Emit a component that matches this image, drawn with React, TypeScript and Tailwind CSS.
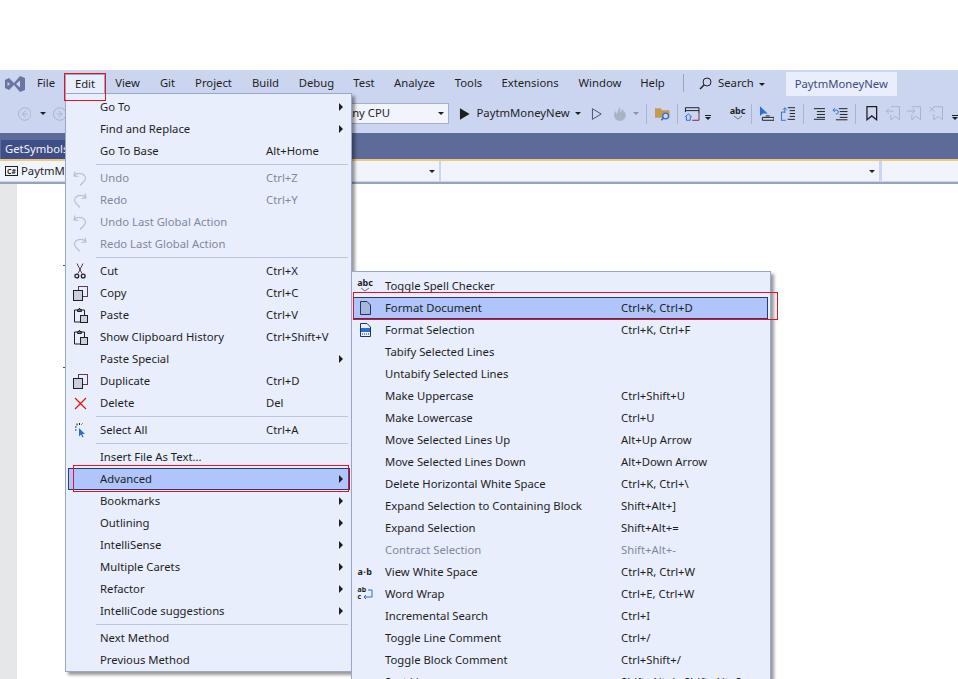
import type { ReactNode } from "react";

type Row = {
  label?: string;
  keys?: string;
  arrow?: boolean;
  off?: boolean;
  active?: boolean;
  icon?: ReactNode;
  sep?: boolean;
};

function Ico({ children, w = 16, h = 16 }: { children: ReactNode; w?: number; h?: number }) {
  return (
    <svg width={w} height={h} viewBox={`0 0 ${w} ${h}`} fill="none" className="block shrink-0">
      {children}
    </svg>
  );
}

const UndoIcon = (
  <Ico w={14} h={16}>
    <path d="M2 1.500 1 6l4.500.5M1.500 5.500C4 2.500 9 3 11.500 5.500c2 2.500.5 5-1 6.500l-3.500 3.500" stroke="#b9c0cf" strokeWidth="1.200" />
  </Ico>
);
const RedoIcon = (
  <Ico w={14} h={16}>
    <path d="M12 1.500 13 6l-4.500.5M12.500 5.500C10 2.500 5 3 2.500 5.500c-2 2.500-.5 5 1 6.500l3.500 3.500" stroke="#b9c0cf" strokeWidth="1.200" />
  </Ico>
);
const CutIcon = (
  <Ico w={12} h={16}>
    <path d="M3 .5l5 10M9 .5l-5 10" stroke="#5b3a4a" />
    <circle cx="2.800" cy="13" r="1.900" stroke="#1e1e1e" strokeWidth="1.300" />
    <circle cx="9.200" cy="13" r="1.900" stroke="#1e1e1e" strokeWidth="1.300" />
  </Ico>
);
const CopyIcon = (
  <Ico w={15} h={15}>
    <rect x="5.500" y="0.500" width="9" height="10" fill="#e9eefc" stroke="#5b3a5a" />
    <rect x="0.500" y="4.500" width="9" height="10" fill="#c9cfdc" stroke="#1e1e1e" />
  </Ico>
);
const PasteIcon = (
  <Ico w={15} h={16}>
    <path d="M4 3H1.500v12H7M9 3h2.500v5" stroke="#1e1e1e" />
    <path d="M4.500 4.500V2.500h1.500l.5-1.500 .5 1.500h1.500v2z" fill="#6b7386" stroke="#1e1e1e" />
    <rect x="7.500" y="8.500" width="7" height="7" fill="#c9cfdc" stroke="#1e1e1e" />
  </Ico>
);
const DeleteIcon = (
  <Ico w={13} h={13}>
    <path d="M1 1l11 11M12 1 1 12" stroke="#e51400" strokeWidth="1.200" />
  </Ico>
);
const SelectAllIcon = (
  <Ico w={11} h={15}>
    <path d="M4 5v8.500l2-2 1.500 3 1-.5-1.300-3H10z" fill="#2a6fc9" />
    <path d="M0 4h1.500M2 .5v2M4.500 0v2M0 7h1.500M6.500 1.500l1-1" stroke="#1e1e1e" />
  </Ico>
);
const SpellIcon = (
  <div className="flex h-[16px] w-[16px] flex-col items-center">
    <span className="text-[9px] leading-[9px] font-bold text-[#1e1e1e]">abc</span>
    <svg width="10" height="5" viewBox="0 0 10 5" fill="none">
      <path d="M1 1l4 3 4-3" stroke="#6b7386" />
    </svg>
  </div>
);
const FormatDocIcon = (
  <Ico w={13} h={14}>
    <path d="M1.500.5h6.500l3.500 3.500v9.500h-10z" fill="#a9b7dc" stroke="#27335f" />
  </Ico>
);
const FormatSelIcon = (
  <Ico w={13} h={14}>
    <path d="M1.500.5h6.500l3.500 3.500v9.500h-10z" fill="#e9eefc" stroke="#27335f" />
    <rect x="2" y="5" width="9" height="4" fill="#2a6fc9" />
    <path d="M3 11h7" stroke="#27335f" strokeDasharray="1 1" />
  </Ico>
);
const WhiteSpaceIcon = (
  <span className="text-[9px] leading-[16px] font-bold tracking-[0.5px] text-[#1e1e1e]">a·b</span>
);
const WrapIcon = (
  <div className="relative h-[16px] w-[15px]">
    <span className="block text-[7px] leading-[7px] font-bold text-[#1e1e1e]">ab</span>
    <span className="block text-[7px] leading-[7px] font-bold text-[#1e1e1e]">c</span>
    <svg width="15" height="14" viewBox="0 0 15 14" fill="none" className="absolute top-[1px] left-0">
      <path d="M10 3h4v7H6M8 8l-2 2 2 2" stroke="#2a6fc9" />
    </svg>
  </div>
);

const editRows: Row[] = [
  { label: "Go To", arrow: true },
  { label: "Find and Replace", arrow: true },
  { label: "Go To Base", keys: "Alt+Home" },
  { sep: true },
  { label: "Undo", keys: "Ctrl+Z", off: true, icon: UndoIcon },
  { label: "Redo", keys: "Ctrl+Y", off: true, icon: RedoIcon },
  { label: "Undo Last Global Action", off: true, icon: UndoIcon },
  { label: "Redo Last Global Action", off: true, icon: RedoIcon },
  { sep: true },
  { label: "Cut", keys: "Ctrl+X", icon: CutIcon },
  { label: "Copy", keys: "Ctrl+C", icon: CopyIcon },
  { label: "Paste", keys: "Ctrl+V", icon: PasteIcon },
  { label: "Show Clipboard History", keys: "Ctrl+Shift+V", icon: PasteIcon },
  { label: "Paste Special", arrow: true },
  { label: "Duplicate", keys: "Ctrl+D", icon: CopyIcon },
  { label: "Delete", keys: "Del", icon: DeleteIcon },
  { sep: true },
  { label: "Select All", keys: "Ctrl+A", icon: SelectAllIcon },
  { sep: true },
  { label: "Insert File As Text..." },
  { label: "Advanced", arrow: true, active: true },
  { label: "Bookmarks", arrow: true },
  { label: "Outlining", arrow: true },
  { label: "IntelliSense", arrow: true },
  { label: "Multiple Carets", arrow: true },
  { label: "Refactor", arrow: true },
  { label: "IntelliCode suggestions", arrow: true },
  { sep: true },
  { label: "Next Method" },
  { label: "Previous Method" },
];

const advancedRows: Row[] = [
  { label: "Toggle Spell Checker", icon: SpellIcon },
  { label: "Format Document", keys: "Ctrl+K, Ctrl+D", active: true, icon: FormatDocIcon },
  { label: "Format Selection", keys: "Ctrl+K, Ctrl+F", icon: FormatSelIcon },
  { label: "Tabify Selected Lines" },
  { label: "Untabify Selected Lines" },
  { label: "Make Uppercase", keys: "Ctrl+Shift+U" },
  { label: "Make Lowercase", keys: "Ctrl+U" },
  { label: "Move Selected Lines Up", keys: "Alt+Up Arrow" },
  { label: "Move Selected Lines Down", keys: "Alt+Down Arrow" },
  { label: "Delete Horizontal White Space", keys: "Ctrl+K, Ctrl+\\" },
  { label: "Expand Selection to Containing Block", keys: "Shift+Alt+]" },
  { label: "Expand Selection", keys: "Shift+Alt+=" },
  { label: "Contract Selection", keys: "Shift+Alt+-", off: true },
  { label: "View White Space", keys: "Ctrl+R, Ctrl+W", icon: WhiteSpaceIcon },
  { label: "Word Wrap", keys: "Ctrl+E, Ctrl+W", icon: WrapIcon },
  { label: "Incremental Search", keys: "Ctrl+I" },
  { label: "Toggle Line Comment", keys: "Ctrl+/" },
  { label: "Toggle Block Comment", keys: "Ctrl+Shift+/" },
  { label: "Sort Lines", keys: "Shift+Alt+L, Shift+Alt+S" },
];

function MenuRow({ row, labelW }: { row: Row; labelW: string }) {
  if (row.sep) {
    return (
      <div className="flex h-[5px] items-center pr-[2px] pl-[28px]">
        <div className="h-px w-full bg-[#bcc5de]" />
      </div>
    );
  }
  return (
    <div
      className={`flex h-[22px] items-center border ${
        row.active ? "border-[#2d3a70] bg-[#afc5fb]" : "border-transparent"
      } ${row.off ? "text-[#80889c]" : "text-[#1e1e1e]"}`}
    >
      <div className="w-[31px] shrink-0">
        <div className="flex w-[22px] justify-center">{row.icon}</div>
      </div>
      <div className={`${labelW} shrink-0 whitespace-nowrap`}>{row.label}</div>
      <div className="whitespace-nowrap">{row.keys}</div>
      {row.arrow && <div className="mr-[6px] ml-auto h-0 w-0 border-y-[4px] border-l-[4px] border-y-transparent border-l-[#1e1e1e]" />}
    </div>
  );
}

function Caret({ className = "" }: { className?: string }) {
  return <div className={`h-0 w-0 border-x-[3px] border-t-[3px] border-x-transparent border-t-[#1e1e1e] ${className}`} />;
}

function Gripper({ className = "" }: { className?: string }) {
  return <div className={`h-[18px] w-[4px] bg-[radial-gradient(#5d6b99_45%,transparent_50%)] bg-[length:2px_2px] ${className}`} />;
}

function ToolSep({ className = "" }: { className?: string }) {
  return <div className={`h-[20px] w-px bg-[#aab3cf] ${className}`} />;
}

function Combo({ className = "", children }: { className?: string; children?: ReactNode }) {
  return (
    <div className={`flex h-[20px] shrink-0 items-center bg-[#f2f4fb] pr-[4px] ${className}`}>
      {children}
      <Caret className="ml-auto" />
    </div>
  );
}

const menuBar = [
  { name: "File", w: "w-[38px]" },
  { name: "Edit", w: "w-[40px]" },
  { name: "View", w: "w-[45px]" },
  { name: "Git", w: "w-[35px]" },
  { name: "Project", w: "w-[57px]" },
  { name: "Build", w: "w-[47px]" },
  { name: "Debug", w: "w-[55px]" },
  { name: "Test", w: "w-[40px]" },
  { name: "Analyze", w: "w-[61px]" },
  { name: "Tools", w: "w-[47px]" },
  { name: "Extensions", w: "w-[76px]" },
  { name: "Window", w: "w-[64px]" },
  { name: "Help", w: "w-[41px]" },
];

export default function App() {
  return (
    <div className="relative h-[679px] w-[958px] overflow-hidden bg-white font-['Noto_Sans',sans-serif] text-[11.3px] text-[#1e1e1e]">
      <div className="h-[70px]" />

      {/* title + menu */}
      <div className="flex h-[28px] items-start bg-[#ccd5f0]">
        <div className="mt-[5px] ml-[5px] w-[22px]">
          <svg width="20" height="18" viewBox="0 0 20 18">
            <path
              fillRule="evenodd"
              d="M0 5 4 3l5 5 6-7 5 2v12l-5 2-6-7-5 5-4-2zM2.500 7v4L5 9zM15 5.500 11 9l4 3.500z"
              fill="#6a76a0"
            />
          </svg>
        </div>
        {menuBar.map((m) => (
          <div
            key={m.name}
            className={`mt-[4px] flex h-[19px] items-center justify-center whitespace-nowrap ${m.w} ${m.name === "Edit" ? "border-x border-t border-[#9ba7c9] bg-[#e9eefc]" : ""}`}
          >
            {m.name}
          </div>
        ))}
        <div className="mt-[4px] ml-[10px] h-[18px] w-px bg-[#9aa5c4]" />
        <svg width="13" height="13" viewBox="0 0 13 13" fill="none" className="mt-[7px] ml-[15px]">
          <circle cx="8" cy="5" r="4" stroke="#1e1e1e" />
          <path d="M5 8l-4 4" stroke="#1e1e1e" strokeWidth="1.500" />
        </svg>
        <div className="mt-[5px] ml-[6px]">Search</div>
        <Caret className="mt-[13px] ml-[5px]" />
        <div className="mt-[2px] ml-[21px] flex h-[24px] w-[111px] items-center justify-center bg-[#e9eefc] text-[#3c4a7c]">PaytmMoneyNew</div>
      </div>

      {/* toolbar */}
      <div className="flex h-[35px] items-center bg-[#ccd5f0] pb-[4px]">
        <Gripper className="ml-[6px]" />
        <svg width="14" height="14" viewBox="0 0 14 14" fill="none" className="ml-[8px]">
          <circle cx="7" cy="7" r="6.500" stroke="#a9b1c6" />
          <path d="M8 3.500 4.500 7 8 10.500M5 7h5" stroke="#a9b1c6" />
        </svg>
        <Caret className="ml-[9px]" />
        <svg width="14" height="14" viewBox="0 0 14 14" fill="none" className="ml-[7px]">
          <circle cx="7" cy="7" r="6.500" stroke="#a9b1c6" />
          <path d="M6 3.500 9.500 7 6 10.500M9 7H4" stroke="#a9b1c6" />
        </svg>
        <Combo className="ml-[271px] !h-[21px] w-[111px] border border-[#a6afc9] pl-[6px]">Any CPU</Combo>
        <svg width="12" height="14" viewBox="0 0 12 14" className="ml-[10px]">
          <path d="M1 1v12l10-6z" fill="#1e1e1e" />
        </svg>
        <div className="ml-[6px] w-[98px] whitespace-nowrap">PaytmMoneyNew</div>
        <Caret className="ml-[4px]" />
        <svg width="12" height="14" viewBox="0 0 12 14" fill="none" className="ml-[10px]">
          <path d="M1.500 1.500v11l9-5.500z" stroke="#4a4f5e" />
        </svg>
        <svg width="15" height="16" viewBox="0 0 15 16" className="ml-[10px]">
          <path d="M7 1c2 3-1 3 1 5 1-1 1-2 1-3 3 2 5 5 4 8-1 3-4 4-6 4-3 0-6-2-6-6 0-2 1-3 2-4 0 1 0 2 1 3 1-2 1-5 3-7z" fill="#aab2c6" />
        </svg>
        <Caret className="ml-[6px] border-t-[#8a92a8]" />
        <ToolSep className="ml-[7px]" />
        <svg width="16" height="14" viewBox="0 0 16 14" className="ml-[8px]">
          <path d="M0 1h6l1 2h8v8H0z" fill="#c49a52" />
          <circle cx="11" cy="9" r="3" fill="#ccd5f0" stroke="#2a6fc9" strokeWidth="1.300" />
          <path d="M9 11l-2.500 2.500" stroke="#2a6fc9" strokeWidth="1.500" />
        </svg>
        <ToolSep className="ml-[6px]" />
        <svg width="17" height="16" viewBox="0 0 17 16" fill="none" className="ml-[6px]">
          <path d="M1.500 6V1.500h14v5M1.500 4.500h14" stroke="#1e1e1e" />
          <path d="M15.500 6v8.500h-7" stroke="#7a2c45" />
          <path d="M1 11l3.500-3 3.500 3M2.500 10.500v4h4v-4" stroke="#2a6fc9" />
        </svg>
        <div className="mt-[8px] ml-[5px] flex flex-col items-center">
          <div className="h-px w-[6px] bg-[#1e1e1e]" />
          <Caret className="mt-[1px]" />
        </div>
        <Gripper className="ml-[8px]" />
        <div className="ml-[7px] flex h-[16px] w-[15px] flex-col items-center">
          <span className="text-[9px] leading-[9px] font-bold">abc</span>
          <svg width="10" height="5" viewBox="0 0 10 5" fill="none">
            <path d="M1 1l4 3 4-3" stroke="#6b7386" />
          </svg>
        </div>
        <ToolSep className="ml-[6px]" />
        <svg width="16" height="16" viewBox="0 0 16 16" fill="none" className="ml-[7px]">
          <path d="M1 0v10l3-2.500h5z" fill="#2a6fc9" />
          <path d="M3.500 11.500h12v3h-12zM7 10h4" stroke="#1e1e1e" />
        </svg>
        <svg width="16" height="16" viewBox="0 0 16 16" fill="none" className="ml-[6px]">
          <path d="M1.500 14V6h3M3 3.500 5 1.500l2 2M5 2v5M1 14.500h5" stroke="#2a6fc9" />
          <path d="M8 1.500h7.500M10 4.500h5.500M10 7.500h5.500M10 10.500h5.500M8 13.500h7.500" stroke="#1e1e1e" />
        </svg>
        <ToolSep className="ml-[7px]" />
        <svg width="13" height="13" viewBox="0 0 13 13" fill="none" className="ml-[9px]">
          <path d="M1 1.500h12M4 4.500h9M4 7.500h9M4 10.500h9M1 12.500h12" stroke="#1e1e1e" />
        </svg>
        <svg width="16" height="14" viewBox="0 0 16 14" fill="none" className="ml-[7px]">
          <path d="M7 1.500h9M8 4.500h8M8 7.500h8M8 10.500h8M4 13h12" stroke="#1e1e1e" />
          <path d="M3 1 1 3l2 2M1.500 3H5c2 0 2 4 0 4H4" stroke="#2a6fc9" />
        </svg>
        <ToolSep className="ml-[7px]" />
        <svg width="12" height="15" viewBox="0 0 12 15" fill="none" className="ml-[10px]">
          <path d="M1 .5h10v13.500l-5-4-5 4z" stroke="#1e1e1e" strokeWidth="1.300" />
        </svg>
        <svg width="15" height="15" viewBox="0 0 15 15" fill="none" className="ml-[8px]">
          <path d="M5 .5h9v13.500l-4.500-3.500-4.500 3.500V9M0 5h8M3 2.500 .5 5 3 7.500" stroke="#a9b1c6" />
        </svg>
        <svg width="15" height="15" viewBox="0 0 15 15" fill="none" className="ml-[7px]">
          <path d="M5 .5h9v13.500l-4.500-3.500-4.500 3.500V9M0 5h8M5.500 2.500 8 5 5.500 7.500" stroke="#a9b1c6" />
        </svg>
        <svg width="15" height="15" viewBox="0 0 15 15" fill="none" className="ml-[7px]">
          <path d="M5 .5h9v13.500l-4.500-3.500-4.500 3.500V8M.5.5l5 5M5.500.5l-5 5" stroke="#a9b1c6" />
        </svg>
        <div className="mt-[8px] ml-[9px] flex flex-col items-center">
          <div className="h-px w-[6px] bg-[#1e1e1e]" />
          <Caret className="mt-[1px]" />
        </div>
      </div>

      {/* document tabs */}
      <div className="flex h-[26px] items-end bg-[#5d6b99]">
        <div className="ml-[1px] flex h-[19px] w-[70px] items-center overflow-hidden bg-[#3f4e86] pl-[4px] whitespace-nowrap text-[#f2f4fb]">GetSymbols.cs</div>
      </div>
      <div className="h-[2px] bg-[#eec781]" />

      {/* navigation bar */}
      <div className="flex h-[23px] items-start gap-[2px] overflow-hidden border-b-[2px] border-[#9aa3bd] bg-[#ccd5f0]">
        <Combo className="w-[439px] pl-[5px]">
          <span className="mr-[3px] flex h-[10px] w-[13px] items-center justify-center border border-[#1e1e1e] text-[7px] leading-none font-bold">C#</span>
          PaytmMoneyNew
        </Combo>
        <Combo className="w-[438px] pr-[3px]" />
        <Combo className="ml-[1px] w-[200px]" />
      </div>

      {/* editor */}
      <div className="flex h-[495px]">
        <div className="w-[17px] bg-[#e6e7e8]" />
        <div className="relative flex-1 bg-white">
          <div className="absolute top-[79px] left-[46px] h-[3px] w-[3px] border-r border-b border-[#555]" />
          <div className="absolute top-[181px] left-[46px] h-[3px] w-[3px] border-r border-b border-[#555]" />
        </div>
      </div>

      {/* open menus */}
      <div className="absolute top-[93px] left-[65px] h-[579px] w-[287px] border border-[#9ba7c9] bg-[#e9eefc] py-[2px] pr-[1px] pl-[2px] shadow-[3px_3px_3px_rgba(0,0,0,0.4)]">
        {editRows.map((r, i) => (
          <MenuRow key={i} row={r} labelW="w-[166px]" />
        ))}
      </div>
      <div className="absolute top-[271px] left-[351px] h-[420px] w-[420px] border border-[#9ba7c9] bg-[#e9eefc] py-[3px] pr-[2px] pl-[1px] shadow-[3px_3px_3px_rgba(0,0,0,0.4)]">
        {advancedRows.map((r, i) => (
          <MenuRow key={i} row={r} labelW="w-[236px]" />
        ))}
      </div>

      {/* red annotation boxes */}
      <div className="absolute top-[73px] left-[64px] h-[28px] w-[42px] border border-[#e81123]" />
      <div className="absolute top-[465px] left-[73px] h-[27px] w-[276px] border border-[#e81123]" />
      <div className="absolute top-[292px] left-[353px] h-[28px] w-[425px] border border-[#e81123]" />
    </div>
  );
}
